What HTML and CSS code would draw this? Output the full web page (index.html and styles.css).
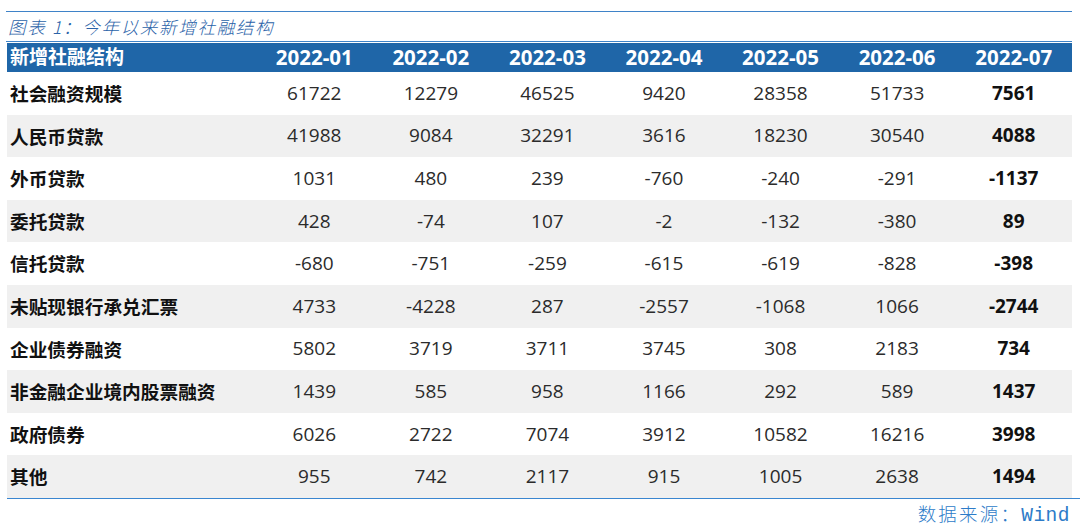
FILE: index.html
```html
<!DOCTYPE html>
<html lang="zh-CN">
<head>
<meta charset="utf-8">
<title>今年以来新增社融结构</title>
<link rel="stylesheet" href="styles.css">
</head>
<body>
<div class="figure">
  <div class="rule rule-top"></div>
  <div class="caption">图表 1：今年以来新增社融结构</div>
  <div class="rule rule-mid"></div>
  <table class="data">
    <colgroup>
      <col class="c-label">
      <col class="c-num"><col class="c-num"><col class="c-num"><col class="c-num"><col class="c-num"><col class="c-num"><col class="c-num">
    </colgroup>
    <thead>
      <tr>
        <th class="lbl">新增社融结构</th>
        <th>2022-01</th><th>2022-02</th><th>2022-03</th><th>2022-04</th><th>2022-05</th><th>2022-06</th><th>2022-07</th>
      </tr>
    </thead>
    <tbody>
      <tr><td class="lbl">社会融资规模</td><td>61722</td><td>12279</td><td>46525</td><td>9420</td><td>28358</td><td>51733</td><td class="last">7561</td></tr>
      <tr class="alt"><td class="lbl">人民币贷款</td><td>41988</td><td>9084</td><td>32291</td><td>3616</td><td>18230</td><td>30540</td><td class="last">4088</td></tr>
      <tr><td class="lbl">外币贷款</td><td>1031</td><td>480</td><td>239</td><td>-760</td><td>-240</td><td>-291</td><td class="last">-1137</td></tr>
      <tr class="alt"><td class="lbl">委托贷款</td><td>428</td><td>-74</td><td>107</td><td>-2</td><td>-132</td><td>-380</td><td class="last">89</td></tr>
      <tr><td class="lbl">信托贷款</td><td>-680</td><td>-751</td><td>-259</td><td>-615</td><td>-619</td><td>-828</td><td class="last">-398</td></tr>
      <tr class="alt"><td class="lbl">未贴现银行承兑汇票</td><td>4733</td><td>-4228</td><td>287</td><td>-2557</td><td>-1068</td><td>1066</td><td class="last">-2744</td></tr>
      <tr><td class="lbl">企业债券融资</td><td>5802</td><td>3719</td><td>3711</td><td>3745</td><td>308</td><td>2183</td><td class="last">734</td></tr>
      <tr class="alt"><td class="lbl">非金融企业境内股票融资</td><td>1439</td><td>585</td><td>958</td><td>1166</td><td>292</td><td>589</td><td class="last">1437</td></tr>
      <tr><td class="lbl">政府债券</td><td>6026</td><td>2722</td><td>7074</td><td>3912</td><td>10582</td><td>16216</td><td class="last">3998</td></tr>
      <tr class="alt"><td class="lbl">其他</td><td>955</td><td>742</td><td>2117</td><td>915</td><td>1005</td><td>2638</td><td class="last">1494</td></tr>
    </tbody>
  </table>
  <div class="rule rule-bottom"></div>
  <div class="source">数据来源：<span class="src-en">Wind</span></div>
</div>
</body>
</html>
```

FILE: styles.css
```css
html, body {
  margin: 0;
  padding: 0;
  background: #ffffff;
}

.figure {
  width: 1080px;
  padding-top: 11px;
  font-family: "Open Sans", "Noto Sans CJK SC", sans-serif;
}

.rule {
  height: 0;
  border-top: 1.5px solid #3f83c8;
}

.rule-top {
  margin-left: 6px;
  width: 1066px;
}

.caption {
  height: 29px;
  line-height: 29px;
  padding-left: 8px;
  font-family: "Noto Sans CJK SC", sans-serif;
  font-weight: 300;
  font-style: italic;
  font-size: 17.5px;
  letter-spacing: 1.7px;
  color: #2a62a8;
}

.rule-mid {
  margin-left: 6px;
  width: 1066px;
}

.data {
  margin-left: 7px;
  margin-top: 1px;
  width: 1065px;
  border-collapse: collapse;
  table-layout: fixed;
}

.c-label { width: 249px; }
.c-num { width: 116.57px; }

.data th {
  height: 29px;
  padding: 0;
  background: #1f66a8;
  color: #ffffff;
  font-weight: 700;
  font-size: 20.5px;
  text-align: center;
  line-height: 29px;
}

.data th.lbl {
  text-align: left;
  padding-left: 3px;
  font-size: 19px;
}

.data td {
  height: 42.6px;
  padding: 0;
  text-align: center;
  font-size: 19px;
  color: #2b2b2b;
  line-height: 1;
}

.data td.lbl {
  text-align: left;
  padding-left: 3px;
  font-weight: 700;
  color: #111111;
  font-family: "Noto Sans CJK SC", sans-serif;
  font-size: 18.7px;
}

.data td.last {
  font-weight: 700;
  color: #111111;
}

.data tr.alt td {
  background: #f0f0f0;
}

.rule-bottom {
  margin-left: 7px;
  width: 1073px;
  border-top: 1.5px solid #3a86d0;
}

.source {
  padding-right: 10px;
  margin-top: 3px;
  text-align: right;
  font-family: "Noto Sans CJK SC", sans-serif;
  font-weight: 300;
  font-size: 18.5px;
  letter-spacing: 2.2px;
  line-height: 22px;
  color: #2d7bc8;
}

.src-en {
  font-family: "Liberation Mono", monospace;
  font-size: 19.5px;
  letter-spacing: 0.5px;
}
```
